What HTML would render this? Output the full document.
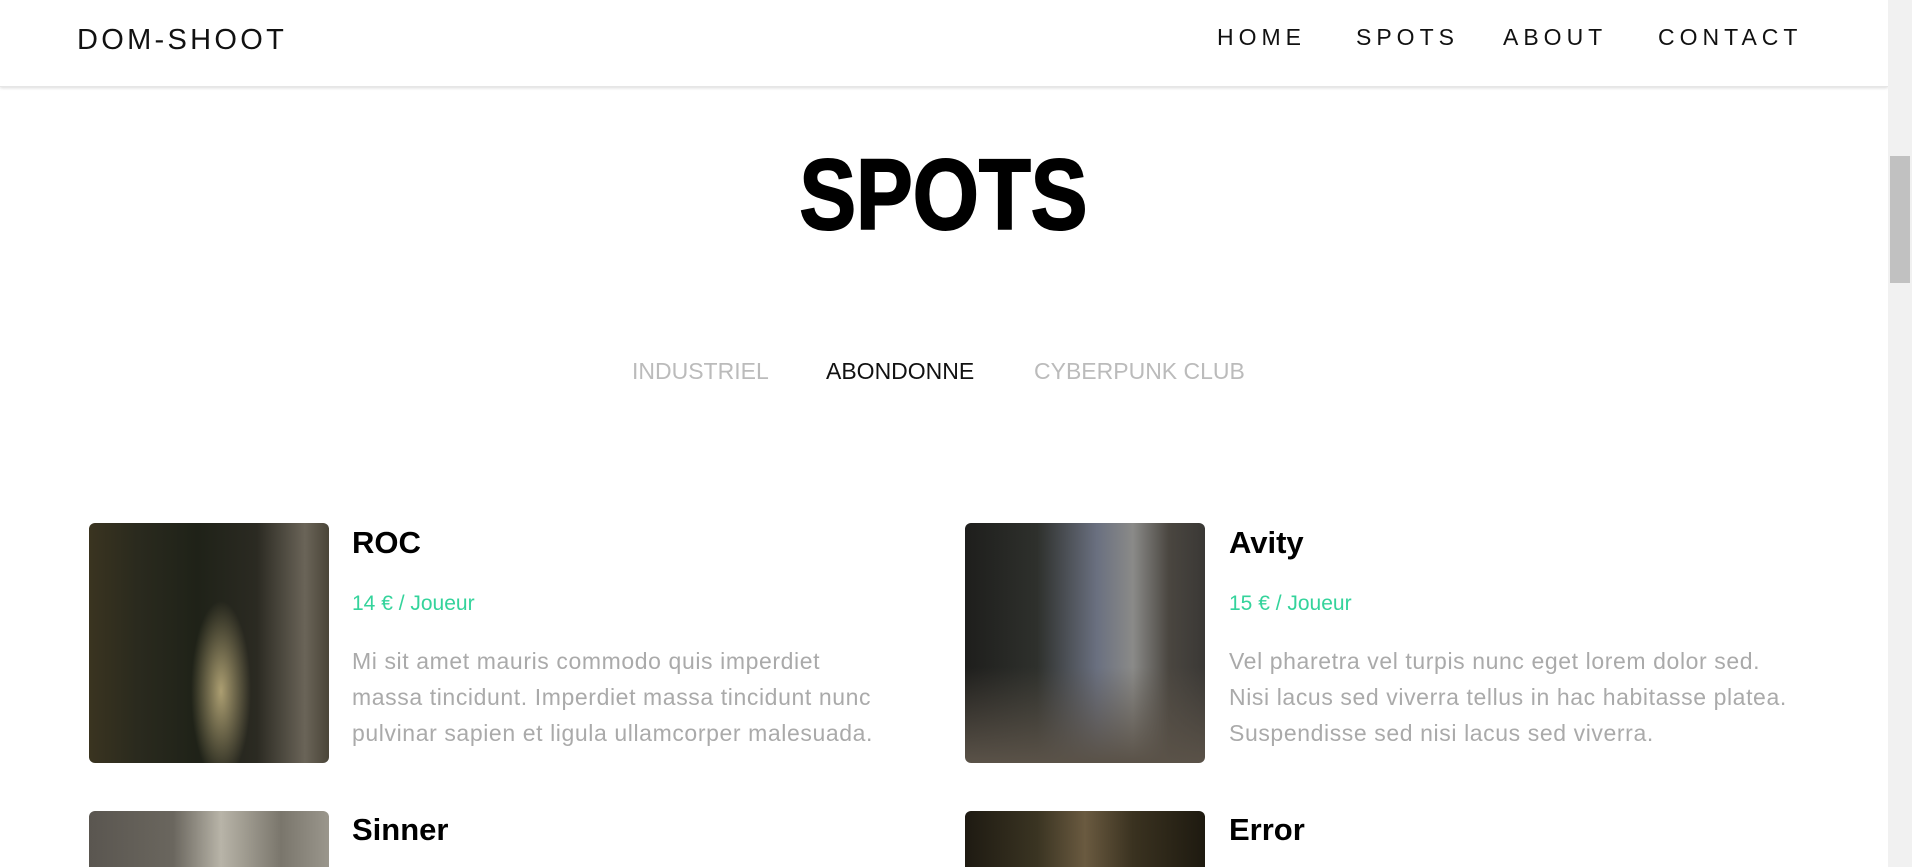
<!DOCTYPE html>
<html><head><meta charset="utf-8"><style>
*{margin:0;padding:0;box-sizing:border-box}
html,body{width:1912px;height:867px;overflow:hidden;background:#fff;font-family:"Liberation Sans",sans-serif}
.wrap{position:relative;width:1912px;height:867px;overflow:hidden}
.hdr{position:absolute;left:0;top:0;width:1888px;height:87px;background:#fff;box-shadow:0 1px 3px rgba(0,0,0,.15);border-bottom:1px solid #e6e6e6}
.logo{position:absolute;left:77px;top:24px;font-size:29px;letter-spacing:3.3px;color:#111;white-space:nowrap}
.nav a{position:absolute;top:24px;font-size:23px;letter-spacing:5px;color:#111;text-decoration:none;white-space:nowrap}
.sb{position:absolute;left:1888px;top:0;width:24px;height:867px;background:#f1f1f1}
.th{position:absolute;left:1890px;top:156px;width:20px;height:127px;background:#c1c1c1}
h1{position:absolute;left:0;width:1888px;top:140px;text-align:center;font-size:100px;font-weight:bold;color:#000;transform:scaleX(.85);transform-origin:940px 0;line-height:110px;-webkit-text-stroke:2px #000}
.f{position:absolute;top:358px;font-size:23px;color:#bbb;white-space:nowrap}
.img{position:absolute;width:240px;height:240px;border-radius:6px}
.t{position:absolute;font-size:31px;font-weight:bold;color:#000;white-space:nowrap}
.p{position:absolute;font-size:21px;color:#34d39b;white-space:nowrap}
.d{position:absolute;font-size:23px;letter-spacing:.6px;line-height:36px;color:#aaa;white-space:nowrap}
</style></head><body><div class="wrap">
<div class="hdr">
<div class="logo">DOM-SHOOT</div>
<div class="nav"><a style="left:1217px">HOME</a><a style="left:1356px">SPOTS</a><a style="left:1503px">ABOUT</a><a style="left:1658px">CONTACT</a></div>
</div>
<div class="sb"></div><div class="th"></div>
<h1>SPOTS</h1>
<div class="f" style="left:632px">INDUSTRIEL</div>
<div class="f" style="left:826px;color:#111">ABONDONNE</div>
<div class="f" style="left:1034px">CYBERPUNK CLUB</div>

<div class="img" style="left:89px;top:523px;background:radial-gradient(ellipse 30px 90px at 55% 70%,rgba(230,210,150,.7),transparent),linear-gradient(90deg,#3a3420 0%,#2a2a1e 20%,#1f2218 45%,#2b2a22 70%,#6a6458 90%,#4a4538 100%)"></div>
<div class="t" style="left:352px;top:525px">ROC</div>
<div class="p" style="left:352px;top:592px">14 € / Joueur</div>
<div class="d" style="left:352px;top:643px">Mi sit amet mauris commodo quis imperdiet<br>massa tincidunt. Imperdiet massa tincidunt nunc<br>pulvinar sapien et ligula ullamcorper malesuada.</div>

<div class="img" style="left:965px;top:523px;background:linear-gradient(180deg,transparent 60%,#5a5248 100%),linear-gradient(90deg,#1e1e1c 0%,#2e302c 30%,#6a7080 55%,#8a8a88 70%,#4a4640 85%,#3a3835 100%)"></div>
<div class="t" style="left:1229px;top:525px">Avity</div>
<div class="p" style="left:1229px;top:592px">15 € / Joueur</div>
<div class="d" style="left:1229px;top:643px">Vel pharetra vel turpis nunc eget lorem dolor sed.<br>Nisi lacus sed viverra tellus in hac habitasse platea.<br>Suspendisse sed nisi lacus sed viverra.</div>

<div class="img" style="left:89px;top:811px;background:linear-gradient(90deg,#5a5650 0%,#6a665e 35%,#b8b4a8 55%,#7a766c 80%,#9a968c 100%)"></div>
<div class="t" style="left:352px;top:812px">Sinner</div>
<div class="img" style="left:965px;top:811px;background:linear-gradient(90deg,#1e1a12 0%,#3a3422 30%,#6a5a40 50%,#3a3220 70%,#1e1a10 100%)"></div>
<div class="t" style="left:1229px;top:812px">Error</div>
</div></body></html>
